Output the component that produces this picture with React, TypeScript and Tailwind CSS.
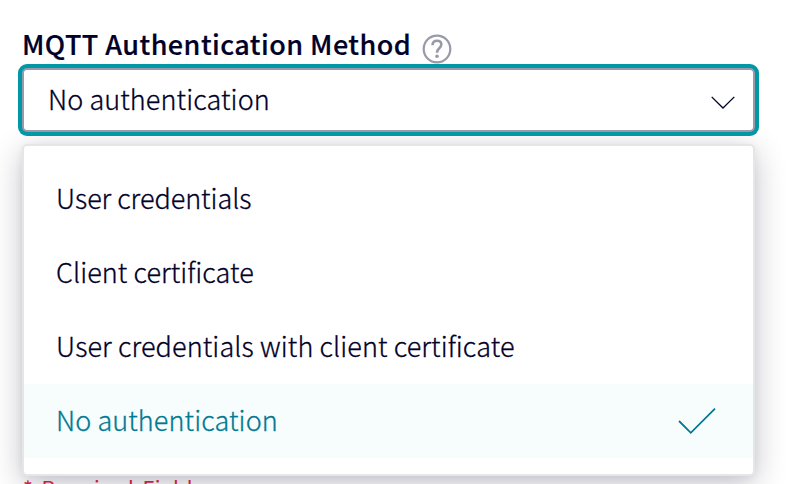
const options = [
  { text: "User credentials", cls: "tracking-[-0.05px]" },
  { text: "Client certificate", cls: "tracking-[0.06px]" },
  { text: "User credentials with client certificate", cls: "tracking-[0.1px]" },
];

export default function App() {
  return (
    <div className="h-[484px] w-[803px] overflow-hidden bg-white pl-[18px] font-['Noto_Sans_CJK_SC','Noto_Sans',sans-serif] text-[27px] font-light text-[#000028] [font-feature-settings:'liga'_1]">
      <div className="flex h-16 items-start pl-1 pt-6">
        <label className="w-[400px] whitespace-nowrap text-[27px] font-medium leading-[40px] tracking-[0.44px] [-webkit-text-stroke:0.2px_currentColor]">MQTT Authentication Method</label>
        <svg className="mt-[10px] h-[30px] w-[30px] shrink-0 overflow-visible" viewBox="0 0 30 30" fill="none" stroke="#9999a9" strokeWidth="2.2">
          <circle cx="15" cy="15" r="13.3" />
          <path d="M10.5 11.3C10.6 8.5 12.4 6.8 15 6.8c2.7 0 4.3 1.5 4.3 3.7 0 3.9-4.3 3.8-4.3 8.2" strokeWidth="2.6" />
          <circle cx="15" cy="22.3" r="1.8" fill="#9999a9" stroke="none" />
        </svg>
      </div>
      <button className="relative z-10 block h-[72px] w-[741px] rounded-[9px] bg-[#0098a6] p-1 text-left">
        <span className="flex h-16 items-center justify-between rounded-[5px] border-2 border-[#9999a9] bg-white pl-6 pr-[18px]">
          <span className="whitespace-nowrap pb-0.5 leading-[40px] tracking-[0.1px] [-webkit-text-stroke:0.3px_currentColor]">No authentication</span>
          <svg className="mt-1 h-6 w-6" viewBox="0 0 24 24" fill="none" stroke="#000028" strokeWidth="1.3">
            <path d="M.7 6.9 12 18 23.3 6.9" />
          </svg>
        </span>
      </button>
      <div className="relative ml-1 mt-2 h-[332px] w-[733px] rounded-[5px] border-2 border-[#e6e6e6] bg-white pt-4 shadow-[0_2px_8px_rgba(0,0,40,0.06),0_8px_32px_rgba(0,0,40,0.24)]">
        {options.map((o) => (
          <div key={o.text} className="flex h-[74px] items-center pl-8">
            <span className={`whitespace-nowrap pb-0.5 leading-[40px] [-webkit-text-stroke:0.3px_currentColor] ${o.cls}`}>{o.text}</span>
          </div>
        ))}
        <div className="flex h-[74px] items-center justify-between bg-[#f7fdfd] pl-8 pr-[37px] text-[#007993]">
          <span className="whitespace-nowrap pb-0.5 leading-[40px] tracking-[0.1px] [-webkit-text-stroke:0.3px_currentColor]">No authentication</span>
          <svg className="h-[28px] w-[38px]" viewBox="0 0 38 28" fill="none" stroke="currentColor" strokeWidth="1.8">
            <path d="M1 14 12.8 25.8 37 1.7" />
          </svg>
        </div>
      </div>
      <p className="relative ml-[5px] text-[21px] font-normal leading-[24px] tracking-[0.5px] text-[#c32240] [word-spacing:3px]">* Required Fields</p>
    </div>
  );
}
